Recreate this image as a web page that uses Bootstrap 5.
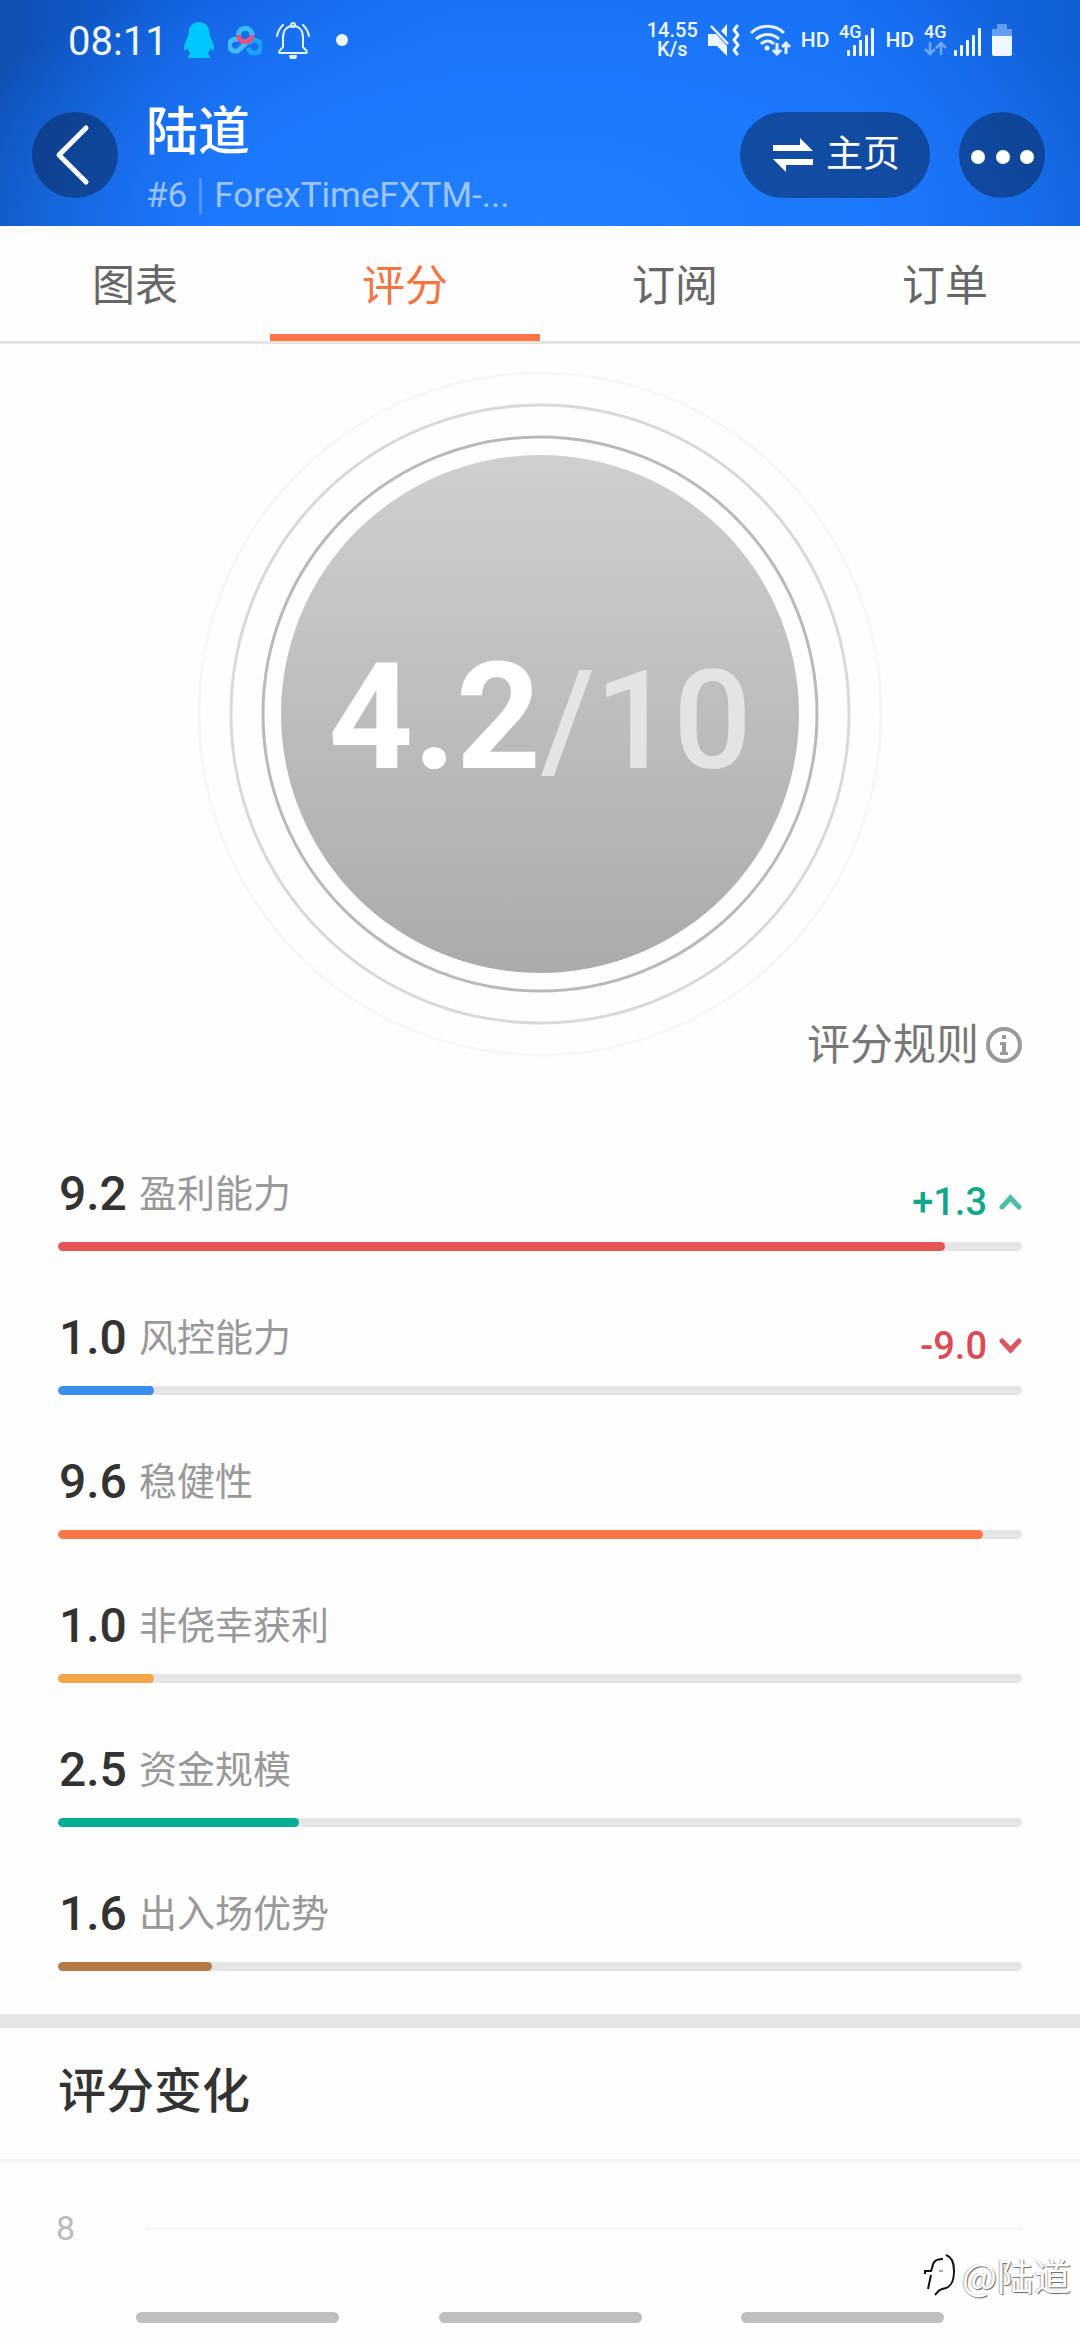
<!DOCTYPE html>
<html lang="zh-CN">
<head>
<meta charset="utf-8">
<meta name="viewport" content="width=device-width, initial-scale=1">
<title>陆道 - 评分</title>
<link rel="stylesheet" href="https://cdn.jsdelivr.net/npm/bootstrap@5.3.0/dist/css/bootstrap.min.css">
<style>
body{font-family:Roboto,"Noto Sans CJK SC",sans-serif;background:#fefefe;color:#333}
svg{display:block;flex:none}
.page{min-height:100vh}
.topbar{background:radial-gradient(ellipse 60% 130% at 50% 100%,#2080ff 0%,#1c78fc 50%,rgba(24,110,244,0) 100%),linear-gradient(90deg,#0f4fb0 0%,#1260dc 17%,#166ff2 40%,#166ff4 78%,#105ed2 100%);color:#fff;padding-bottom:2px}
.statusbar{height:80px;padding:0 68px;color:#f0f6ff}
.clock{font-size:40px;line-height:48px;padding-top:4px;margin-right:2px}
.notices{gap:14px}
.status-icons{gap:10px}
.netspeed{font-size:20px;line-height:19px;font-weight:500}
.tag{font-size:21px;line-height:24px;font-weight:500}
.titlebar{padding:18px 35px 0 32px}
.roundbtn{height:86px;min-width:86px;margin-top:14px;border:0;border-radius:43px;background:rgba(10,40,90,.55);color:#fff;font-size:37px;line-height:48px}
.homebtn{width:190px;margin-right:29px}
.who{margin-left:28px}
.who h1{font-size:52px;line-height:70px;font-weight:500}
.account{font-size:35px;line-height:56px;color:rgba(255,255,255,.58)}
.account .rank{border-right:3px solid rgba(255,255,255,.22);line-height:36px;padding-right:12px;margin-right:12px}
.tabs{border-bottom:3px solid #e5e5e5}
.tabs .nav-link{font-size:43px;line-height:60px;padding:30px 0 18px;color:#666;border:0;border-bottom:7px solid transparent;border-radius:0}
.tabs .nav-link.active{color:#f47444;border-color:#ff7545;background:none}
.dial{padding:27px 0 58px}
.dial .rings{width:686px;height:686px}
.dial .value{position:absolute;inset:27px 0 58px 0;padding-top:10px}
.dial .num{font-size:148px;line-height:180px;font-weight:700;color:#fff}
.dial .max{font-size:138px;line-height:180px;font-weight:500;color:#e4e4e4}
.rules{position:absolute;right:58px;bottom:40px;gap:7px;font-size:43px;line-height:60px;color:#777;text-decoration:none}
.scores{padding:49px 58px 43px}
.score + .score{margin-top:57px}
.score .pts{font-size:48px;line-height:60px;font-weight:500;width:81px;padding-left:1px}
.score .what{font-size:38px;line-height:60px;font-weight:400;color:#999}
.score .delta{font-size:38px;line-height:44px;font-weight:500;gap:12px;padding-top:16px}
.score .progress{height:9px;border-radius:5px;background:#e5e5e5;margin-top:18px}
.score .progress-bar{border-radius:5px}
.band{height:14px;background:#e5e5e5}
.section-title{font-size:48px;line-height:70px;font-weight:500;padding:29px 58px 32px;border-bottom:3px solid #f2f2f2}
.chart{padding:44px 58px 0 56px;font-size:34px;line-height:44px;color:#bbb}
.chart .gridline{height:3px;background:#f6f6f6}
.chart .tick{width:90px}
.sysnav{position:absolute;left:0;right:0;bottom:17px;padding:0 136px}
.sysnav button{width:203px;height:11px;border:0;padding:0;border-radius:6px;background:#bfbfbf}
.author{position:absolute;right:9px;bottom:40px;gap:6px;font-family:"Noto Sans CJK SC",sans-serif;font-size:37px;line-height:50px;color:#fff;text-shadow:1px 1px 1px #666,-1px 0 1px #bbb}
</style>
</head>
<body>
<div class="page position-relative overflow-hidden">
<header class="topbar">
  <div class="statusbar d-flex align-items-center justify-content-between">
    <div class="notices d-flex align-items-center">
      <span class="clock">08:11</span>
      <svg width="30" height="36" viewBox="0 0 30 36" fill="#00c8ff"><path d="M15 0C8 0 4.500 5 4.500 12c0 3-4.500 8-4.500 14 0 3 1.500 3 3.500 0 .5 2 1.500 4 3 5.500L4 34v2h22v-2l-2.500-2.500c1.500-1.500 2.500-3.500 3-5.500 2 3 3.500 3 3.500 0 0-6-4.500-11-4.500-14C25.500 5 22 0 15 0z"/></svg>
      <svg width="34" height="30" viewBox="0 0 34 30" fill="none" stroke-width="5"><path d="M22 14 12 24a6 6 0 1 1-1.500-9" stroke="#42bdf8"/><path d="M22 17a6.500 6.500 0 1 1-1 8" stroke="#18a4ff" stroke-linecap="round"/><path d="M10.500 10a6.800 6.800 0 0 1 13.600 0" stroke="#38bdf8"/><path d="M10.500 10a6.800 6.800 0 0 0 13.600 0" stroke="#e8527f"/></svg>
      <svg width="34" height="37" viewBox="0 0 34 37" fill="none" stroke="#e4f2ff" stroke-width="2" stroke-linecap="round" stroke-linejoin="round"><path d="M7 16C7 8 11 4 17 4s10 4 10 12v9c0 1 4 3 4 5 0 1-1 1-2 1H5c-1 0-2 0-2-1 0-2 4-4 4-5zM1 14C2 9 4 6 7 3M33 14C32 9 30 6 27 3"/><circle cx="17" cy="3" r="2"/><path d="M14 34h6c0 2-1 2.500-3 2.500s-3-.5-3-2.500z" fill="#e4f2ff"/></svg>
      <svg width="24" height="24" viewBox="0 0 24 24"><circle cx="18" cy="12" r="6" fill="#f0f6ff"/></svg>
    </div>
    <div class="status-icons d-flex align-items-center">
      <span class="netspeed text-center">14.55<br>K/s</span>
      <svg width="32" height="32" viewBox="0 0 32 32" fill="#f0f6ff"><path d="M19 0v13l-6-6z"/><path d="M0 10h8l11 12v10L9 22H0z"/><path d="m3 2 17 18" stroke="#f0f6ff" stroke-width="2.500"/><path d="m29 2-3 4 4 5-4 5 4 5-4 5 3 4" fill="none" stroke="#f0f6ff" stroke-width="3" stroke-linejoin="round" stroke-linecap="round"/></svg>
      <svg width="41" height="33" viewBox="0 0 41 33" fill="none" stroke="#e4f0ff" stroke-width="3"><path d="M1 9c9-9 24-9 33 0M6 15c7-6 16-6 23 0M11 20c4-4 9-4 13 0"/><circle cx="17" cy="24" r="2.500" fill="#f0f6ff" stroke="none"/><path d="M27 19v11m-4-4 4 4 4-4M36 30V18m-4 5 4-4 4 4"/></svg>
      <span class="tag">HD</span>
      <svg width="36" height="42" viewBox="0 -4 36 42" fill="#f0f6ff"><text x="0" y="15" font-size="18" font-weight="500">4G</text><rect x="8" y="27" width="3" height="6" rx="1"/><rect x="14" y="22" width="3" height="11" rx="1"/><rect x="20" y="17" width="3" height="16" rx="1"/><rect x="26" y="12" width="3" height="21" rx="1"/><rect x="32" y="5" width="3" height="28" rx="1"/></svg>
      <span class="tag">HD</span>
      <svg width="58" height="42" viewBox="0 -4 58 42" fill="#f0f6ff"><text x="0" y="15" font-size="18" font-weight="500">4G</text><path d="M6 19v12m-5-5 5 5 5-5M17 32V20m-5 5 5-5 5 5" fill="none" stroke="#6fa8ff" stroke-width="2.500"/><rect x="30" y="27" width="3" height="6" rx="1"/><rect x="36" y="22" width="3" height="11" rx="1"/><rect x="42" y="17" width="3" height="16" rx="1"/><rect x="48" y="12" width="3" height="21" rx="1"/><rect x="54" y="5" width="3" height="28" rx="1"/></svg>
      <svg width="20" height="32" viewBox="0 0 20 32"><path d="M5 0h10v5h4q1 0 1 1v6H0V6q0-1 1-1h4z" fill="#649eee"/><path d="M0 12h20v18q0 2-2 2H2q-2 0-2-2z" fill="#f0f6ff"/></svg>
    </div>
  </div>
  <div class="titlebar d-flex align-items-start">
    <button class="roundbtn p-0" aria-label="返回"><svg width="86" height="86" viewBox="0 0 86 86" fill="none" stroke="#fff" stroke-width="5" stroke-linecap="round" stroke-linejoin="round"><path d="M54 16 27 43l27 27"/></svg></button>
    <div class="who me-auto"><h1 class="m-0">陆道</h1><div class="account d-flex align-items-center"><span class="rank">#6</span><span>ForexTimeFXTM-...</span></div></div>
    <button class="roundbtn homebtn d-flex align-items-center justify-content-center p-0"><svg class="me-2" width="48" height="36" viewBox="0 0 48 36" fill="#fff"><path d="M3 8h27V1l13 13H3zM43 28H16v7L3 22h40z"/></svg>主页</button>
    <button class="roundbtn p-0" aria-label="更多"><svg width="86" height="86" viewBox="0 0 86 86" fill="#fff"><circle cx="19" cy="45" r="7"/><circle cx="44" cy="45" r="7"/><circle cx="68" cy="45" r="7"/></svg></button>
  </div>
</header>
<nav class="tabs nav nav-fill">
  <a class="nav-link col" href="#">图表</a>
  <a class="nav-link col active" href="#" aria-current="page">评分</a>
  <a class="nav-link col" href="#">订阅</a>
  <a class="nav-link col" href="#">订单</a>
</nav>
<main>
  <section class="dial position-relative d-flex justify-content-center">
    <svg class="rings" viewBox="0 0 686 686" fill="none" stroke-width="3"><defs><linearGradient id="g" x1="0" y1="0" x2="0" y2="1"><stop stop-color="#cfcfcf"/><stop offset="1" stop-color="#ababab"/></linearGradient></defs><circle cx="343" cy="343" r="341" stroke="#f7f7f7"/><circle cx="343" cy="343" r="309" stroke="#d9d9d9"/><circle cx="343" cy="343" r="277" stroke="#b9b9b9"/><circle cx="343" cy="343" r="259" fill="url(#g)"/></svg>
    <div class="value d-flex align-items-center justify-content-center"><div class="d-flex align-items-baseline"><span class="num">4.2</span><span class="max">/10</span></div></div>
    <a class="rules d-flex align-items-center" href="#">评分规则<svg width="36" height="36" viewBox="0 0 36 36" fill="#999"><circle cx="18" cy="18" r="16" fill="none" stroke="#999" stroke-width="4"/><path d="M16 8h4v4h-4zM14 15h6v10h2v3h-8v-3h2v-7h-2z"/></svg></a>
  </section>
  <section class="scores">
    <div class="score"><div class="d-flex"><span class="pts">9.2</span><span class="what me-auto">盈利能力</span><span class="delta d-flex align-items-center" style="color:#13a68c">+1.3<svg width="23" height="16" viewBox="0 0 23 16" fill="none" stroke="#4dbda5" stroke-width="5" stroke-linecap="round"><path d="m3 13 8.500-9L20 13"/></svg></span></div><div class="progress"><div class="progress-bar" style="width:92%;background:#e65353"></div></div></div>
    <div class="score"><div class="d-flex"><span class="pts">1.0</span><span class="what me-auto">风控能力</span><span class="delta d-flex align-items-center" style="color:#dc4a55">-9.0<svg width="23" height="16" viewBox="0 0 23 16" fill="none" stroke="#dc5560" stroke-width="5" stroke-linecap="round"><path d="m3 3 8.500 9L20 3"/></svg></span></div><div class="progress"><div class="progress-bar" style="width:10%;background:#388eef"></div></div></div>
    <div class="score"><div class="d-flex"><span class="pts">9.6</span><span class="what">稳健性</span></div><div class="progress"><div class="progress-bar" style="width:96%;background:#fb7644"></div></div></div>
    <div class="score"><div class="d-flex"><span class="pts">1.0</span><span class="what">非侥幸获利</span></div><div class="progress"><div class="progress-bar" style="width:10%;background:#f3a548"></div></div></div>
    <div class="score"><div class="d-flex"><span class="pts">2.5</span><span class="what">资金规模</span></div><div class="progress"><div class="progress-bar" style="width:25%;background:#04ad91"></div></div></div>
    <div class="score"><div class="d-flex"><span class="pts">1.6</span><span class="what">出入场优势</span></div><div class="progress"><div class="progress-bar" style="width:16%;background:#b37843"></div></div></div>
  </section>
  <div class="band"></div>
  <h2 class="section-title m-0">评分变化</h2>
  <div class="chart d-flex align-items-center"><span class="tick">8</span><div class="gridline flex-fill"></div></div>
</main>
<div class="author d-flex align-items-center"><svg width="32" height="42" viewBox="0 0 32 42" fill="none" stroke="#111" stroke-width="2"><path d="M19 5C11 5 9 8 8 14l-1 3H1v3M7 21 4 35M22 1c6 2 8 7 8 16 0 11-3 17-12 18-4 1-5 4-7 6"/><path d="M15 17h4" stroke="#aaa"/></svg><span>@陆道</span></div>
<nav class="sysnav d-flex justify-content-between"><button aria-label="最近"></button><button aria-label="主屏"></button><button aria-label="返回"></button></nav>
</div>
<script src="https://cdn.jsdelivr.net/npm/bootstrap@5.3.0/dist/js/bootstrap.bundle.min.js"></script>
</body>
</html>
